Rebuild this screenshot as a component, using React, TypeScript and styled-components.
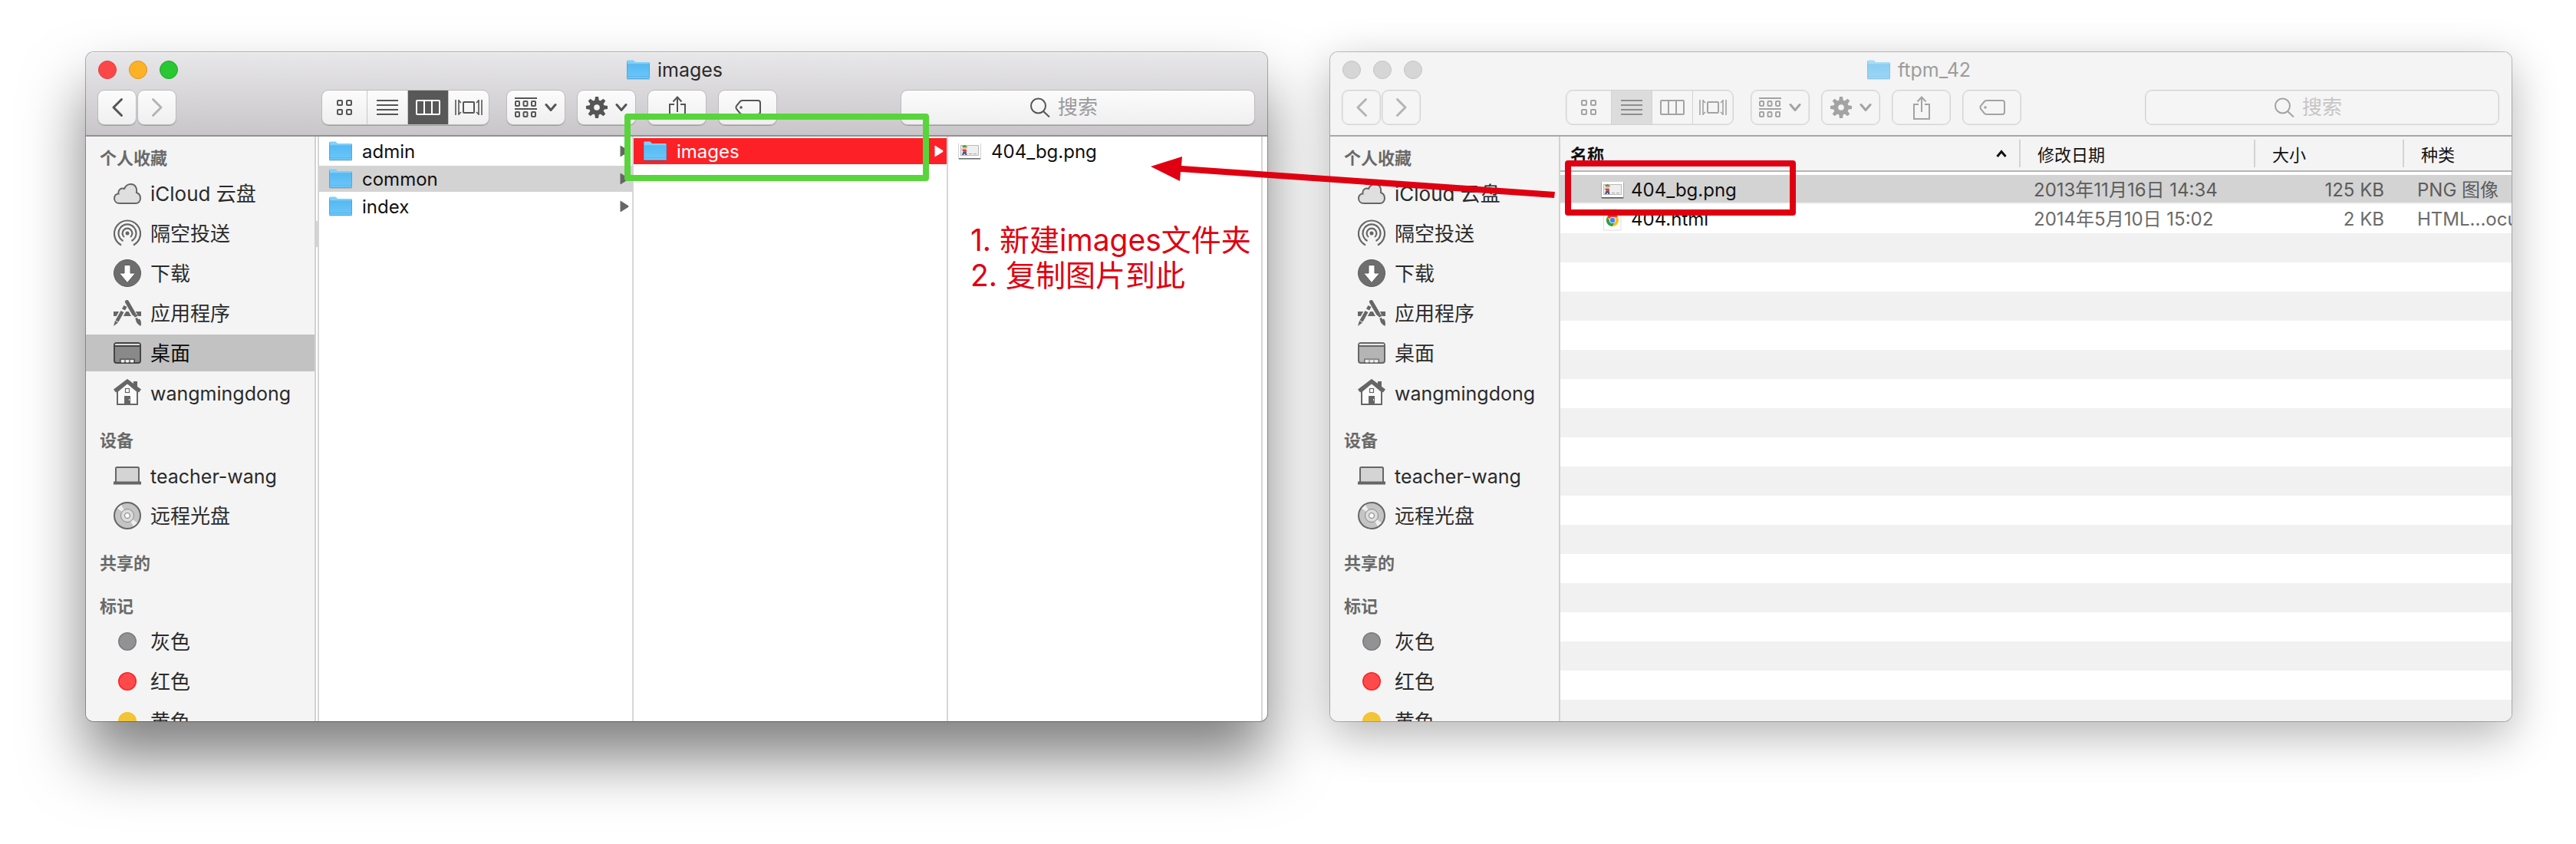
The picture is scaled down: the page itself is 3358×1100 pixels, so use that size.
import React from "react";
import styled, { createGlobalStyle, css } from "styled-components";

const GlobalStyle = createGlobalStyle`
  *, *::before, *::after { box-sizing: border-box; }
  body {
    margin: 0;
    background: #fff;
    font-family: Inter, "Liberation Sans", "Noto Sans CJK SC", sans-serif;
    overflow: hidden;
  }
  button, input { font-family: inherit; }
`;

/* ---------- page ---------- */

const Desktop = styled.main`
  position: relative;
  display: flex;
  gap: 82px;
  height: 100vh;
  padding: 68px 84px 160px 112px;
`;

const Window = styled.section<{ $active: boolean }>`
  position: relative;
  flex: 1;
  min-width: 0;
  display: flex;
  flex-direction: column;
  border-radius: 10px;
  overflow: hidden;
  background: #fff;
  box-shadow: ${(p) =>
    p.$active
      ? "0 0 0 1px rgba(0,0,0,.3), 0 48px 80px rgba(0,0,0,.5)"
      : "0 0 0 1px rgba(0,0,0,.24), 0 18px 60px rgba(0,0,0,.3)"};
`;

/* ---------- toolbar ---------- */

const Toolbar = styled.header<{ $active: boolean }>`
  flex: none;
  display: flex;
  flex-direction: column;
  gap: 15px;
  height: 110px;
  padding: 10px 16px 0 15px;
  color: ${(p) => (p.$active ? "#555" : "#a3a3a3")};
  border-bottom: 2px solid ${(p) => (p.$active ? "#929192" : "#a8a8a8")};
  background: ${(p) =>
    p.$active ? "linear-gradient(#e8e7e9, #c8c6c9)" : "#f4f4f4"};
  box-shadow: inset 0 1px 0 #f6f6f6;
`;

const TitleRow = styled.div`
  display: grid;
  grid-template-columns: 1fr auto 1fr;
  align-items: center;
  height: 24px;
`;

const Lights = styled.div`
  display: flex;
  gap: 16px;
  padding-left: 1px;
`;

const Light = styled.button<{ $fill: string; $edge: string }>`
  width: 24px;
  height: 24px;
  padding: 0;
  border: 1px solid ${(p) => p.$edge};
  border-radius: 50%;
  background: ${(p) => p.$fill};
`;

const Title = styled.h1<{ $active: boolean }>`
  display: flex;
  align-items: center;
  gap: 10px;
  margin: 0;
  padding-right: 4px;
  font-size: 25px;
  line-height: 24px;
  font-weight: 400;
  color: ${(p) => (p.$active ? "#2b2b2b" : "#9c9c9c")};
  svg { opacity: ${(p) => (p.$active ? 1 : 0.65)}; }
`;

const Controls = styled.div`
  display: flex;
  height: 46px;
`;

const NavPair = styled.div`
  display: flex;
  gap: 1px;
  margin-right: 189px;
`;

const surface = css<{ $active: boolean }>`
  border: 1px solid ${(p) => (p.$active ? "#bcbbbd" : "#d3d3d3")};
  background: ${(p) => (p.$active ? "linear-gradient(#fcfcfc, #efefef)" : "#f5f5f5")};
  box-shadow: ${(p) => (p.$active ? "0 1px 0 rgba(0,0,0,.22)" : "inset 0 0 0 1px #e6e6e6")};
  border-radius: 9px;
`;

const ToolButton = styled.button<{ $active: boolean; $width: number; $dim?: boolean }>`
  ${surface}
  display: flex;
  align-items: center;
  justify-content: center;
  gap: 10px;
  width: ${(p) => p.$width}px;
  padding: 0;
  color: ${(p) => (p.$dim ? "#b4b4b4" : "inherit")};
`;

const Segments = styled.div<{ $active: boolean }>`
  ${surface}
  display: flex;
  width: 219px;
  margin-right: 22px;
`;

const Segment = styled.button<{ $active: boolean; $on: boolean }>`
  flex: 1 1 53px;
  display: flex;
  align-items: center;
  justify-content: center;
  padding: 0;
  border: 0;
  border-left: 1px solid ${(p) => (p.$active ? "#c6c6c6" : "#d3d3d3")};
  background: none;
  color: inherit;
  &:first-child { border-left: 0; flex-basis: 58px; }
  ${(p) =>
    p.$on &&
    css`
      background: ${p.$active ? "#585858" : "#dcdcdc"};
      color: ${p.$active ? "#fff" : "#8e8e8e"};
    `}
`;

const Actions = styled.div`
  display: flex;
  gap: 15px;
`;

const Search = styled.label<{ $active: boolean }>`
  ${surface}
  display: flex;
  align-items: center;
  gap: 10px;
  width: 462px;
  margin-left: auto;
  padding-left: 168px;
`;

const SearchInput = styled.input<{ $active: boolean }>`
  flex: 1;
  min-width: 0;
  padding: 0;
  border: 0;
  outline: 0;
  background: none;
  font-size: 26px;
  line-height: 40px;
  &::placeholder { color: ${(p) => (p.$active ? "#9b9b9b" : "#c6c6c6")}; opacity: 1; }
`;

/* ---------- sidebar ---------- */

const Body = styled.div`
  flex: 1;
  min-height: 0;
  display: flex;
  overflow: hidden;
`;

const Sidebar = styled.nav`
  flex: none;
  width: 300px;
  padding-top: 8px;
  overflow: hidden;
  background: #f4f4f4;
  border-right: 2px solid #d2d2d2;
`;

const Group = styled.div`
  margin-bottom: 16px;
`;

const GroupName = styled.h2`
  margin: 0;
  padding-left: 18px;
  font-size: 22px;
  line-height: 40px;
  font-weight: 700;
  color: #696969;
`;

const Place = styled.a<{ $on?: boolean; $latin?: boolean }>`
  display: flex;
  align-items: center;
  gap: 12px;
  height: 52px;
  padding-left: 36px;
  border: solid #f4f4f4;
  border-width: 2px 0;
  font-size: ${(p) => (p.$latin ? 25 : 26)}px;
  line-height: 46px;
  white-space: nowrap;
  text-decoration: none;
  color: ${(p) => (p.$on ? "#0c0c0c" : "#2b2b2b")};
  background: ${(p) => (p.$on ? "#c2c2c2" : "none")};
  svg { flex: none; color: ${(p) => (p.$on ? "#454545" : "#666")}; }
  span { padding-top: 2px; }
`;

/* ---------- column view ---------- */

const Gutter = styled.div`
  flex: none;
  width: 4px;
  padding-top: 110px;
  border-right: 2px solid #d6d6d6;
`;

const GutterKnob = styled.div`
  height: 34px;
  background: #d2d2d2;
`;

const Columns = styled.div`
  flex: 1;
  display: flex;
  min-width: 0;
  padding-right: 6px;
`;

const Column = styled.div`
  flex: 1;
  min-width: 0;
  display: flex;
  flex-direction: column;
  gap: 2px;
  padding-top: 2px;
  border-right: 2px solid #d6d6d6;
`;

const Entry = styled.button<{ $tone?: "grey" | "red" }>`
  display: flex;
  align-items: center;
  gap: 13px;
  height: 34px;
  padding: 0 4px 0 13px;
  border: 0;
  font-size: 24px;
  line-height: 32px;
  text-align: left;
  color: ${(p) => (p.$tone === "red" ? "#fff" : "#111")};
  background: ${(p) =>
    p.$tone === "red" ? "#fd2127" : p.$tone === "grey" ? "#d3d3d3" : "none"};
`;

const EntryName = styled.span`
  flex: 1;
  padding-top: 2px;
`;

const Opener = styled.span<{ $light?: boolean }>`
  display: flex;
  color: ${(p) => (p.$light ? "#fff" : "#666")};
`;

/* ---------- list view ---------- */

const ListPane = styled.div`
  flex: 1;
  min-width: 0;
  overflow: hidden;
  background: repeating-linear-gradient(#f1f1f1 0 38px, #fff 38px 76px) 0 50px / 100% 1900px no-repeat;
`;

const Table = styled.table`
  width: 100%;
  table-layout: fixed;
  border-collapse: separate;
  border-spacing: 0;
`;

const Th = styled.th<{ $width?: number; $bold?: boolean }>`
  width: ${(p) => (p.$width ? `${p.$width}px` : "auto")};
  height: 46px;
  padding: 0;
  background: #f4f4f4;
  border-bottom: 2px solid #b5b5b5;
  font-size: 22px;
  font-weight: ${(p) => (p.$bold ? 700 : 400)};
  text-align: left;
  color: #111;
`;

const HeadLabel = styled.div<{ $first?: boolean }>`
  display: flex;
  align-items: center;
  justify-content: space-between;
  height: 36px;
  padding: ${(p) => (p.$first ? "0 16px 0 13px" : "0 0 0 22px")};
  border-left: ${(p) => (p.$first ? "0" : "2px solid #d3d3d3")};
`;

const SpacerCell = styled.td`
  height: 4px;
  padding: 0;
  background: #fff;
`;

const FileRow = styled.tr<{ $on?: boolean }>`
  height: 38px;
  color: ${(p) => (p.$on ? "#5c5c5c" : "#6b6b6b")};
  td {
    background: ${(p) => (p.$on ? "linear-gradient(#d3d3d3 36px, #f1f1f1 36px)" : "none")};
  }
`;

const Td = styled.td<{ $right?: boolean }>`
  height: 38px;
  padding: ${(p) => (p.$right ? "2px 24px 0 0" : "2px 0 0 19px")};
  font-size: 24px;
  line-height: 36px;
  text-align: ${(p) => (p.$right ? "right" : "left")};
  white-space: nowrap;
  overflow: hidden;
`;

const FileName = styled.div`
  display: flex;
  align-items: center;
  gap: 9px;
  height: 36px;
  padding-left: 34px;
  color: #111;
`;

/* ---------- annotations drawn over the windows ---------- */

const Frame = styled.div<{ $x: number; $y: number; $w: number; $h: number; $color: string }>`
  position: absolute;
  left: ${(p) => p.$x}px;
  top: ${(p) => p.$y}px;
  width: ${(p) => p.$w}px;
  height: ${(p) => p.$h}px;
  border: 8px solid ${(p) => p.$color};
  border-radius: 4px;
  pointer-events: none;
`;

const Note = styled.p`
  position: absolute;
  left: 1153px;
  top: 222px;
  margin: 0;
  font-size: 39px;
  line-height: 46px;
  white-space: nowrap;
  color: #df0011;
`;

const Arrow = styled.svg`
  position: absolute;
  left: 1500px;
  top: 200px;
  pointer-events: none;
`;

/* ---------- icons ---------- */

const Folder = () => (
  <svg width="30" height="26" viewBox="0 0 30 26">
    <defs>
      <linearGradient id="folder" x1="0" y1="0" x2="0" y2="1">
        <stop offset="0" stopColor="#56b9f2" />
        <stop offset="1" stopColor="#6cc8fb" />
      </linearGradient>
    </defs>
    <path d="M0 25.5h30" stroke="#000" strokeOpacity=".12" />
    <path d="M0 2Q0 .5 1.5 .5H8Q9 .5 9.7 1.4L11 3H28.500Q30 3 30 4.500V8H0Z" fill="#7fd0fa" />
    <path d="M0 6H30V23.500Q30 25 28.500 25H1.500Q0 25 0 23.500Z" fill="url(#folder)" />
    <path d="M.5 5.500H29.500M.5 21.500H29.500" stroke="#4ea9de" strokeOpacity=".5" fill="none" />
    <path d="M.5 2V23.500Q.5 24.500 1.500 24.500H28.500Q29.500 24.500 29.500 23.500V4" stroke="#489fd2" strokeOpacity=".7" fill="none" />
  </svg>
);

const Picture = () => (
  <svg width="30" height="24" viewBox="0 0 30 24">
    <rect x="0" y="1" width="30" height="22" rx="1.500" fill="#000" opacity=".18" />
    <path d="M1 21.500H29" stroke="#000" strokeOpacity=".45" strokeWidth="2" />
    <rect x="1" y="1" width="28" height="20" fill="#fff" />
    <rect x="3.500" y="4.500" width="23" height="13" fill="#eee" stroke="#b9b9b9" />
    <path d="M5 5.500L9 4L12.500 7L7 8Z" fill="#5d9b39" />
    <rect x="6.500" y="7" width="4.500" height="3" fill="#e8b9a5" />
    <path d="M5 8.500L7 10H10.500L11.500 12.500H6.500Z" fill="#e0343e" />
    <path d="M6.500 12.500H10.500L11.500 17H9.500L8.500 15L7 17H5Z" fill="#4a5288" />
    <rect x="4.500" y="9.500" width="1.500" height="2" fill="#e8b9a5" />
    <path d="M14 15.500h4M20 15.500h4" stroke="#aaa" />
  </svg>
);

const HtmlDoc = () => (
  <svg width="30" height="32" viewBox="0 0 30 32">
    <path d="M3.500 2H18.500L26 9V30H3.500Z" fill="#fff" stroke="#dedede" />
    <path d="M18.500 2V9H26Z" fill="#f0f0f0" stroke="#dedede" />
    <circle cx="15" cy="17" r="8" fill="#fbc116" />
    <path d="M15 17L8 13A8 8 0 0 1 22 13H15Z" fill="#e33b2e" />
    <path d="M8 13A8 8 0 0 0 14.500 25L18.500 19 12 19Z" fill="#2ba24c" />
    <circle cx="15" cy="17" r="4" fill="#fff" />
    <circle cx="15" cy="17" r="3.200" fill="#4285f4" />
  </svg>
);

const Disclosure = () => (
  <svg width="12" height="16" viewBox="0 0 12 16">
    <path d="M.5 1.500Q.5 .5 1.500 1L11 7Q12 8 11 9L1.500 15Q.5 15.500 .5 14.500Z" fill="currentColor" />
  </svg>
);

const line = { fill: "none", stroke: "currentColor", strokeWidth: 2 };

const ChevronLeft = () => (
  <svg width="16" height="26" {...line} strokeWidth={3} strokeLinecap="round" strokeLinejoin="round">
    <path d="M13.500 2.500L3 13L13.500 23.500" />
  </svg>
);
const ChevronRight = () => (
  <svg width="16" height="26" {...line} strokeWidth={3} strokeLinecap="round" strokeLinejoin="round">
    <path d="M2.500 2.500L13 13L2.500 23.500" />
  </svg>
);
const ChevronDown = () => (
  <svg width="16" height="12" {...line} strokeWidth={3} strokeLinecap="round" strokeLinejoin="round">
    <path d="M2 2.500L8 9.500L14 2.500" />
  </svg>
);
const GridIcon = () => (
  <svg width="20" height="20" {...line}>
    {[1, 13].map((x) => [1, 13].map((y) => <rect key={`${x}-${y}`} x={x} y={y} width="6" height="6" rx="1" />))}
  </svg>
);
const LinesIcon = () => (
  <svg width="28" height="20" {...line}>
    <path d="M0 1H28M0 7H28M0 13H28M0 19H28" />
  </svg>
);
const ColumnsIcon = () => (
  <svg width="32" height="20" {...line}>
    <rect x="1" y="1" width="30" height="18" rx="1" />
    <path d="M11 1V19M21 1V19" />
  </svg>
);
const FlowIcon = () => (
  <svg width="36" height="20" {...line}>
    <rect x="11" y="3" width="14" height="14" rx="1" />
    <path d="M1 0V20M35 0V20" strokeWidth="1.600" />
    <path d="M5 0V20M5 1L8 4M5 19L8 16M31 0V20M31 1L28 4M31 19L28 16" strokeWidth="1.600" />
  </svg>
);
const ArrangeIcon = () => (
  <svg width="29" height="26" {...line}>
    <path d="M0 1H29M0 15H29" />
    {[1, 11.5, 22].map((x) => [5, 19].map((y) => <rect key={`${x}-${y}`} x={x} y={y} width="5" height="6" rx="1" />))}
  </svg>
);
const GearIcon = () => (
  <svg width="28" height="28" viewBox="-14 -14 28 28" fill="none" stroke="currentColor">
    <circle r="6.800" strokeWidth="6" />
    {[0, 45, 90, 135, 180, 225, 270, 315].map((a) => (
      <path key={a} d="M-2 -14H2L3 -8H-3Z" fill="currentColor" stroke="none" transform={`rotate(${a})`} />
    ))}
  </svg>
);
const ShareIcon = () => (
  <svg width="24" height="32" {...line}>
    <path d="M8 12H2V31H22V12H16M12 22V3M6.500 8.500L12 2.500L17.500 8.500" />
  </svg>
);
const TagIcon = () => (
  <svg width="34" height="20" {...line}>
    <path d="M10 1H30Q33 1 33 4V16Q33 19 30 19H10Q8 19 7 18L2 12Q1 10 2 8L7 2Q8 1 10 1Z" />
    <circle cx="8" cy="10" r="1.800" fill="currentColor" stroke="none" />
  </svg>
);
const SearchIcon = () => (
  <svg width="26" height="26" {...line}>
    <circle cx="10.500" cy="11" r="9.500" />
    <path d="M17 18L25 25.500" />
  </svg>
);
const SortIcon = () => (
  <svg width="14" height="10" {...line} strokeWidth={3}>
    <path d="M1.500 9L7 2.500L12.500 9" />
  </svg>
);

const CloudIcon = () => (
  <svg width="36" height="36" {...line}>
    <path
      d="M8 31C3.500 31 1 28 1 24.500C1 21 3.500 18.500 6.500 18.500C5.500 13.500 10 10.500 14 12C16 7.500 19 6 22.500 6C27.500 6 31 10 30 17C33 18 35 21 35 24.500C35 28 32.500 31 29 31Z"
      fill="#dfdfdf"
    />
  </svg>
);
const AirDropIcon = () => (
  <svg width="36" height="36" {...line} strokeWidth={2.2}>
    <circle cx="18" cy="18" r="2.500" fill="currentColor" stroke="none" />
    <path d="M14 23A6.400 6.400 0 1 1 22 23M12.500 28A11.500 11.500 0 1 1 23.500 28M10 33.500A17 17 0 1 1 26 33.500" />
  </svg>
);
const DownloadIcon = () => (
  <svg width="36" height="36">
    <circle cx="18" cy="18" r="17.500" fill="#6e6e6e" stroke="#5c5c5c" />
    <path d="M14 7.500H22V18H28.500L18 30.500L7.500 18H14Z" fill="#fff" stroke="#5c5c5c" />
  </svg>
);
const AppsIcon = () => (
  <svg width="36" height="36" fill="none" stroke="currentColor">
    <path d="M0 19H8M12.500 19H24M29 19H36" strokeWidth="6" />
    <path d="M4 30L16 8" stroke="#f4f4f4" strokeWidth="8" />
    <path d="M17 3L32 30" stroke="#f4f4f4" strokeWidth="8" />
    <path d="M4.500 28.500L11.500 16M13 13.500L15.500 9" strokeWidth="4.600" />
    <path d="M2 28L6 30.500L0 35Z" fill="currentColor" stroke="none" />
    <path d="M17.500 3.500L26.500 19" strokeWidth="5" strokeLinecap="round" />
    <path d="M27 22.500L31 20.500M29.500 24.500L32.500 30" strokeWidth="3" />
    <path d="M29 27.500L34 25.500Q37 29 35.500 35Q30 32 29 27.500Z" fill="currentColor" stroke="none" />
  </svg>
);
const DesktopIcon = () => (
  <svg width="36" height="36" {...line}>
    <rect x="1" y="5" width="34" height="26" rx="3" fill="currentColor" fillOpacity=".45" />
    <path d="M2 6H34V8H2Z" fill="#fff" fillOpacity=".7" stroke="none" />
    <path d="M1 9H35" />
    <path d="M10.500 27.500H13.500V30H10.500ZM16.500 27.500H19.500V30H16.500ZM22.500 27.500H25.500V30H22.500Z" stroke="#eee" strokeWidth="1" fill="#eee" />
    <path d="M8.500 30V26H27.500V30" strokeWidth="1" />
  </svg>
);
const HomeIcon = () => (
  <svg width="36" height="36" {...line}>
    <path d="M26 3H31V13L26 9Z" fill="currentColor" stroke="none" />
    <path d="M5 16V33H31V16L18 5Z" fill="#fafafa" />
    <path d="M1.500 15.500L18 3L34.500 15.500" strokeWidth="5" />
    <rect x="15.500" y="12.500" width="5" height="5" strokeWidth="1.200" fill="#fff" />
    <path d="M14 22H22V33H14Z" fill="currentColor" stroke="none" />
    <path d="M20.500 26V28" stroke="#fff" strokeWidth="1" />
  </svg>
);
const LaptopIcon = () => (
  <svg width="36" height="36" {...line}>
    <rect x="3" y="7" width="30" height="20" rx="1.500" fill="#d4d4d4" />
    <path d="M0 27.500H36" strokeWidth="4" />
  </svg>
);
const DiscIcon = () => (
  <svg width="36" height="36" viewBox="-18 -18 36 36" fill="none" stroke="currentColor">
    <circle r="17" strokeWidth="2" fill="#c4c4c4" />
    <path d="M0 0L-13 -9.500L-8 -14ZM0 0L13 9.500L8 14Z" fill="#efefef" stroke="none" />
    <circle r="8.500" fill="#dcdcdc" strokeWidth="1" stroke="#8a8a8a" />
    <circle r="3.500" fill="#fff" strokeWidth="1" stroke="#777" />
  </svg>
);
const Dot = ({ fill, edge }: { fill: string; edge: string }) => (
  <svg width="36" height="36">
    <circle cx="18" cy="18" r="11.200" fill={fill} stroke={edge} strokeWidth="1.600" />
  </svg>
);

/* ---------- data ---------- */

type PlaceItem = { name: string; icon: React.ReactNode; latin?: boolean };

const groups: { name: string; items: PlaceItem[] }[] = [
  {
    name: "个人收藏",
    items: [
      { name: "iCloud 云盘", icon: <CloudIcon /> },
      { name: "隔空投送", icon: <AirDropIcon /> },
      { name: "下载", icon: <DownloadIcon /> },
      { name: "应用程序", icon: <AppsIcon /> },
      { name: "桌面", icon: <DesktopIcon /> },
      { name: "wangmingdong", icon: <HomeIcon />, latin: true },
    ],
  },
  {
    name: "设备",
    items: [
      { name: "teacher-wang", icon: <LaptopIcon />, latin: true },
      { name: "远程光盘", icon: <DiscIcon /> },
    ],
  },
  { name: "共享的", items: [] },
  {
    name: "标记",
    items: [
      { name: "灰色", icon: <Dot fill="#929294" edge="#7d7d80" /> },
      { name: "红色", icon: <Dot fill="#ff4a4c" edge="#fb2529" /> },
      { name: "黄色", icon: <Dot fill="#f0c53c" edge="#fbc11c" /> },
    ],
  },
];

const files = [
  { name: "404_bg.png", icon: <Picture />, date: "2013年11月16日 14:34", size: "125 KB", kind: "PNG 图像", on: true },
  { name: "404.html", icon: <HtmlDoc />, date: "2014年5月10日 15:02", size: "2 KB", kind: "HTML...ocument", on: false },
];

const activeLights = [
  ["#fc4748", "#e5393b"],
  ["#fdb125", "#dd9420"],
  ["#29c732", "#1fa628"],
];
const idleLight = ["#d6d6d6", "#c4c4c4"];

/* ---------- parts ---------- */

function WindowBar({ active, title, view }: { active: boolean; title: string; view: number }) {
  const views = [
    { label: "图标", icon: <GridIcon /> },
    { label: "列表", icon: <LinesIcon /> },
    { label: "分栏", icon: <ColumnsIcon /> },
    { label: "Cover Flow", icon: <FlowIcon /> },
  ];
  return (
    <Toolbar $active={active}>
      <TitleRow>
        <Lights>
          {["关闭", "最小化", "缩放"].map((label, i) => {
            const [fill, edge] = active ? activeLights[i] : idleLight;
            return <Light key={label} aria-label={label} $fill={fill} $edge={edge} />;
          })}
        </Lights>
        <Title $active={active}>
          <Folder />
          {title}
        </Title>
      </TitleRow>
      <Controls>
        <NavPair>
          <ToolButton aria-label="后退" $active={active} $width={51} $dim={!active}><ChevronLeft /></ToolButton>
          <ToolButton aria-label="前进" $active={active} $width={51} $dim><ChevronRight /></ToolButton>
        </NavPair>
        <Segments $active={active}>
          {views.map((v, i) => (
            <Segment key={v.label} aria-label={v.label} $active={active} $on={i === view}>{v.icon}</Segment>
          ))}
        </Segments>
        <Actions>
          <ToolButton aria-label="排列" $active={active} $width={77}><ArrangeIcon /><ChevronDown /></ToolButton>
          <ToolButton aria-label="操作" $active={active} $width={77}><GearIcon /><ChevronDown /></ToolButton>
          <ToolButton aria-label="共享" $active={active} $width={77}><ShareIcon /></ToolButton>
          <ToolButton aria-label="标记" $active={active} $width={77}><TagIcon /></ToolButton>
        </Actions>
        <Search $active={active}>
          <SearchIcon />
          <SearchInput $active={active} type="text" placeholder="搜索" aria-label="搜索" />
        </Search>
      </Controls>
    </Toolbar>
  );
}

function Places({ selected }: { selected?: string }) {
  return (
    <Sidebar>
      {groups.map((g) => (
        <Group key={g.name}>
          <GroupName>{g.name}</GroupName>
          {g.items.map((p) => (
            <Place key={p.name} href="#" $on={p.name === selected} $latin={p.latin}>
              {p.icon}
              <span>{p.name}</span>
            </Place>
          ))}
        </Group>
      ))}
    </Sidebar>
  );
}

export default function App() {
  return (
    <>
      <GlobalStyle />
      <Desktop>
        <Window $active>
          <WindowBar active title="images" view={2} />
          <Body>
            <Places selected="桌面" />
            <Gutter><GutterKnob /></Gutter>
            <Columns>
              <Column>
                {["admin", "common", "index"].map((name) => (
                  <Entry key={name} $tone={name === "common" ? "grey" : undefined}>
                    <Folder />
                    <EntryName>{name}</EntryName>
                    <Opener><Disclosure /></Opener>
                  </Entry>
                ))}
              </Column>
              <Column>
                <Entry $tone="red">
                  <Folder />
                  <EntryName>images</EntryName>
                  <Opener $light><Disclosure /></Opener>
                </Entry>
              </Column>
              <Column>
                <Entry>
                  <Picture />
                  <EntryName>404_bg.png</EntryName>
                </Entry>
              </Column>
            </Columns>
          </Body>
          <Frame $x={702} $y={80} $w={397} $h={88} $color="#58d53a" />
          <Note>
            1. 新建images文件夹
            <br />
            2. 复制图片到此
          </Note>
        </Window>

        <Window $active={false}>
          <WindowBar active={false} title="ftpm_42" view={1} />
          <Body>
            <Places />
            <ListPane>
              <Table>
                <thead>
                  <tr>
                    <Th $bold><HeadLabel $first>名称<SortIcon /></HeadLabel></Th>
                    <Th $width={306}><HeadLabel>修改日期</HeadLabel></Th>
                    <Th $width={194}><HeadLabel>大小</HeadLabel></Th>
                    <Th $width={142}><HeadLabel>种类</HeadLabel></Th>
                  </tr>
                </thead>
                <tbody>
                  <tr><SpacerCell colSpan={4} /></tr>
                  {files.map((f) => (
                    <FileRow key={f.name} $on={f.on}>
                      <Td><FileName>{f.icon}{f.name}</FileName></Td>
                      <Td>{f.date}</Td>
                      <Td $right>{f.size}</Td>
                      <Td>{f.kind}</Td>
                    </FileRow>
                  ))}
                </tbody>
              </Table>
            </ListPane>
          </Body>
          <Frame $x={306} $y={141} $w={301} $h={72} $color="#df0011" />
        </Window>

        <Arrow width="530" height="64" viewBox="0 0 530 64">
          <path d="M0 17L41 4L40 16L527 50L526 58L39 24L38 36Z" fill="#df0011" />
        </Arrow>
      </Desktop>
    </>
  );
}
